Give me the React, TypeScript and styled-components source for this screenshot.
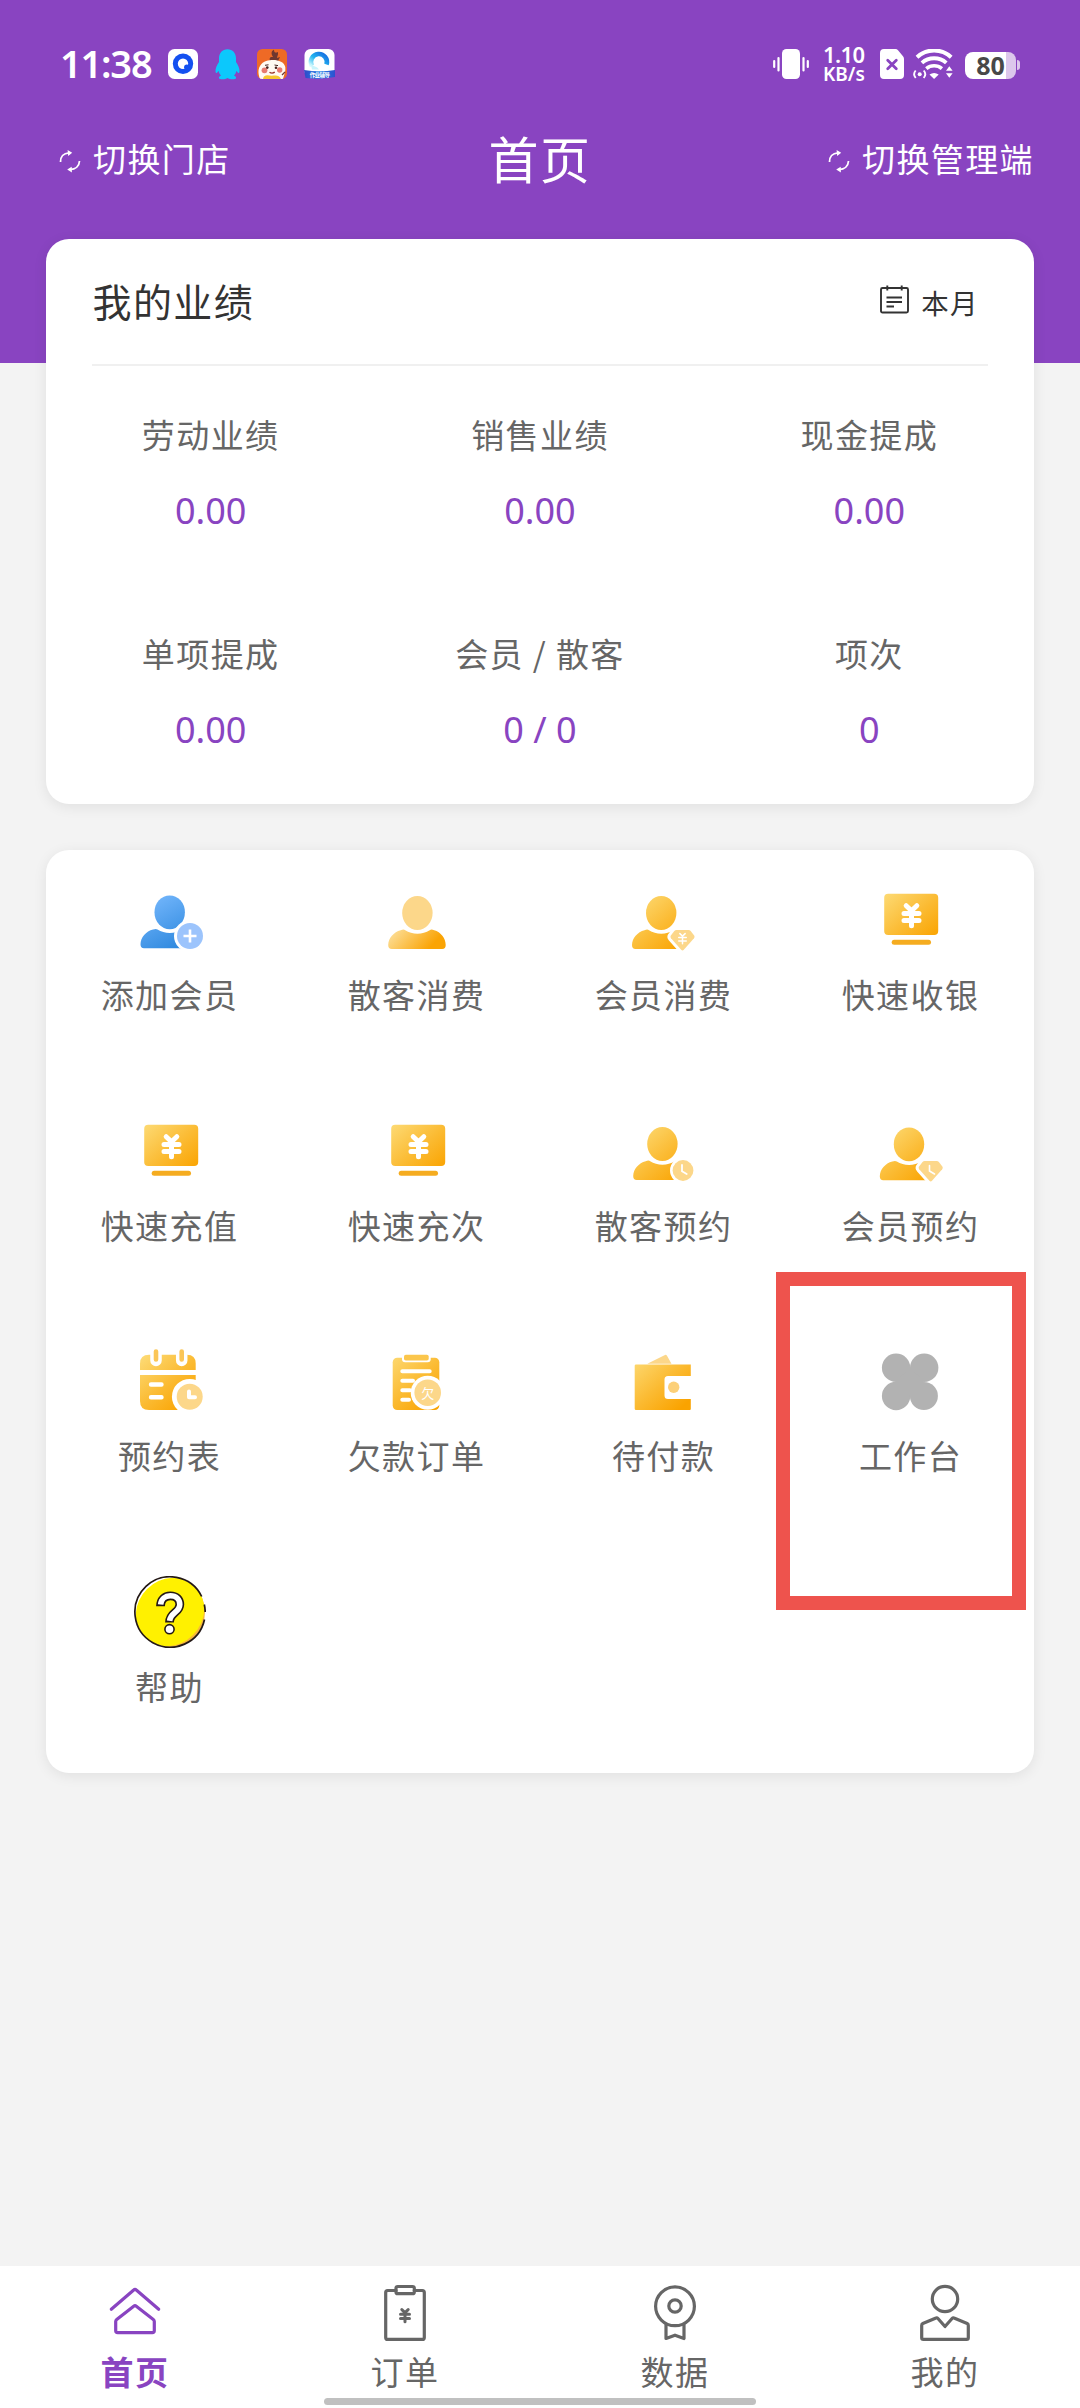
import React from "react";
import styled, { createGlobalStyle } from "styled-components";

const PURPLE = "#8944c1";
const GREY = "#666666";

const GlobalStyle = createGlobalStyle`
  *, *::before, *::after { box-sizing: border-box; }
  body {
    margin: 0;
    background: #f3f3f3;
    font-family: "Noto Sans CJK SC", "Noto Sans", sans-serif;
    letter-spacing: 1.4px;
  }
  svg { display: block; flex: none; }
`;

const Page = styled.div`
  display: flex;
  flex-direction: column;
  width: 1080px;
  height: 2408px;
  overflow: hidden;
  background: #f3f3f3;
`;

const Header = styled.header`
  flex: none;
  height: 363px;
  background: ${PURPLE};
  color: #fff;
`;

const StatusBar = styled.div`
  display: flex;
  align-items: center;
  justify-content: space-between;
  height: 118px;
  padding: 10px 60px 0 60px;
  font-family: "Noto Sans", sans-serif;
  letter-spacing: 0;
`;

const StatusGroup = styled.div<{ $gap: number }>`
  display: flex;
  align-items: center;
  gap: ${(p) => p.$gap}px;
`;

const Clock = styled.span`
  width: 93px;
  margin-bottom: 2px;
  font-size: 38px;
  font-weight: 600;
  line-height: 44px;
  letter-spacing: -1.2px;
  white-space: nowrap;
`;

const NetSpeed = styled.div`
  display: flex;
  flex-direction: column;
  width: 43px;
  font-weight: 600;
  white-space: nowrap;
`;

const SpeedValue = styled.span`
  font-size: 22px;
  line-height: 19px;
  letter-spacing: -0.6px;
`;

const SpeedUnit = styled.span`
  font-size: 19px;
  line-height: 20px;
`;

const Battery = styled.div`
  display: flex;
  align-items: center;
  gap: 1px;
`;

const BatteryBody = styled.div<{ $level: number }>`
  display: flex;
  align-items: center;
  justify-content: center;
  width: 51px;
  height: 27px;
  margin-top: 2px;
  border-radius: 8px;
  background: linear-gradient(90deg, #fff ${(p) => p.$level}%, #dcc7ec ${(p) => p.$level}%);
  color: #484848;
  font-size: 25px;
  font-weight: 700;
  line-height: 27px;
`;

const BatteryTip = styled.div`
  width: 3px;
  height: 10px;
  margin-top: 2px;
  border-radius: 0 3px 3px 0;
  background: #dcc7ec;
`;

const NavBar = styled.div`
  display: grid;
  grid-template-columns: 1fr auto 1fr;
  align-items: center;
  height: 80px;
  padding: 0 46px 0 59px;
`;

const NavAction = styled.div<{ $end?: boolean }>`
  display: flex;
  align-items: center;
  justify-content: ${(p) => (p.$end ? "flex-end" : "flex-start")};
  gap: 12px;
  font-size: 33px;
  line-height: 44px;

  svg {
    margin-top: 5px;
  }
`;

const Title = styled.h1`
  margin: 0 0 3px -13px;
  font-size: 50px;
  font-weight: 400;
  line-height: 60px;
`;

const Card = styled.section`
  flex: none;
  margin: 0 46px;
  border-radius: 23px;
  background: #fff;
  box-shadow: 0 3px 14px rgba(0, 0, 0, 0.08);
`;

const StatsCard = styled(Card)`
  margin-top: -124px;
`;

const MenuCard = styled(Card)`
  display: grid;
  grid-template-columns: repeat(4, 1fr);
  grid-template-rows: repeat(4, 230.67px);
  margin-top: 46px;
`;

const CardHeader = styled.div`
  display: flex;
  align-items: center;
  justify-content: space-between;
  height: 127px;
  margin: 0 46px;
  padding: 0 9px 2px 0;
  border-bottom: 2px solid #f0f0f0;
  color: #333;
`;

const CardTitle = styled.h2`
  margin: 0 0 2px 0.5px;
  font-size: 39px;
  font-weight: 400;
  line-height: 50px;
`;

const Period = styled.div`
  display: flex;
  align-items: center;
  gap: 12px;
  padding-top: 2px;
  font-size: 27.5px;
  line-height: 36px;

  svg {
    margin-bottom: 4px;
  }
`;

const StatsGrid = styled.div`
  display: grid;
  grid-template-columns: repeat(3, 1fr);
  grid-template-rows: 219px 219px;
`;

const Stat = styled.div`
  display: flex;
  flex-direction: column;
  align-items: center;
  gap: 30px;
  padding-top: 46px;
`;

const Label = styled.span`
  color: ${GREY};
  font-size: 33px;
  line-height: 44px;
`;

const Value = styled.span`
  color: ${PURPLE};
  font-family: "Noto Sans", sans-serif;
  font-size: 36px;
  line-height: 50px;
  letter-spacing: 0;
`;

const Tile = styled.div`
  position: relative;
  display: flex;
  flex-direction: column;
  align-items: center;
  gap: 16px;
  padding-top: 34px;
`;

const Highlight = styled.div`
  position: absolute;
  top: -39px;
  right: 8.5px;
  width: 250px;
  height: 338px;
  border: 14.5px solid #ee534d;
`;

const Spacer = styled.div`
  flex: 1;
`;

const TabBar = styled.nav`
  display: grid;
  grid-template-columns: repeat(4, 1fr);
  flex: none;
  height: 142px;
  padding-top: 17px;
  background: #fff;
`;

const Tab = styled.div<{ $active?: boolean }>`
  display: flex;
  flex-direction: column;
  align-items: center;
  gap: 6px;
  color: ${(p) => (p.$active ? PURPLE : GREY)};
  font-size: 33px;
  font-weight: ${(p) => (p.$active ? 700 : 400)};
  line-height: 44px;
`;

const HomeIndicator = styled.div`
  flex: none;
  align-self: center;
  width: 432px;
  height: 7px;
  margin: -10px 0 3px;
  border-radius: 4px;
  background: #c0c0c0;
`;

/* ---------- status bar icons ---------- */

const BrowserApp = () => (
  <svg width="30" height="30" viewBox="0 0 30 30">
    <rect width="30" height="30" rx="6.5" fill="#fff" />
    <circle cx="15" cy="14.7" r="10.2" fill="#1450f0" />
    <circle cx="15" cy="14.7" r="5.2" fill="#fff" />
    <circle cx="18.8" cy="18.3" r="2.7" fill="#1450f0" />
  </svg>
);

const PenguinApp = () => (
  <svg width="25" height="31" viewBox="0 0 25 31">
    <path
      d="M12.5 .3C7.300 .3 4 4.200 4 9.300V13C2 16 .2 19.500 .5 22.600C.7 24.800 2 24.300 3.500 21.700C4 23.700 4.800 25.200 6 26.400C4.300 27.200 3.600 28.200 4 29.300C4.500 30.600 10.500 30.600 12.500 29C14.500 30.600 20.500 30.600 21 29.300C21.400 28.200 20.700 27.200 19 26.400C20.200 25.200 21 23.700 21.500 21.700C23 24.300 24.300 24.800 24.500 22.600C24.800 19.500 23 16 21 13V9.300C21 4.200 17.700 .3 12.500 .3Z"
      fill="#0cc8fc"
    />
  </svg>
);

const CartoonApp = () => (
  <svg width="30" height="30" viewBox="0 0 30 30">
    <defs>
      <clipPath id="cartoon"><rect width="30" height="30" rx="5.500" /></clipPath>
    </defs>
    <g clipPath="url(#cartoon)">
      <rect width="30" height="30" fill="#ee6a26" />
      <path d="M13 12C12 8 13.500 8 16 8C14 5 14 2 17 .8C17 4 19 4 21 3C21.500 6 20 7 20 9L23 8L21 12Z" fill="#70372f" />
      <path d="M3 30C1.500 26 .5 21 3 17C6 11.500 12 11 16 11C22 11 27 13 28.300 18C29 22 27 26 26 30Z" fill="#fffaf2" />
      <circle cx="7.500" cy="21.300" r="2.900" fill="#e77b70" />
      <circle cx="22.700" cy="21" r="2.700" fill="#e77b70" />
      <circle cx="10.300" cy="18.600" r="1.300" fill="#44211c" />
      <circle cx="19" cy="18.800" r="1.300" fill="#44211c" />
      <path d="M8 16.300L11.500 15.800M17.500 16L21 16.600" stroke="#44211c" strokeWidth="1" />
      <path d="M12.500 23.200Q15 25 17.800 23.200" stroke="#9d3a2c" strokeWidth="1.400" fill="none" />
      <path d="M6 30C7 25 11 26.500 14.500 26.700C19 26.500 22 25.500 24 30Z" fill="#f7c62f" />
      <path d="M25 26L28 23" stroke="#70372f" strokeWidth="1.200" />
    </g>
  </svg>
);

const CloudApp = () => (
  <svg width="31" height="30" viewBox="0 0 31 30">
    <defs>
      <linearGradient id="arch" x1="0" y1="1" x2="1" y2="0">
        <stop offset="0" stopColor="#d5fbff" />
        <stop offset=".45" stopColor="#22b4f0" />
        <stop offset="1" stopColor="#1668e0" />
      </linearGradient>
      <linearGradient id="ribbon" x1="0" y1="0" x2="1" y2="0">
        <stop offset="0" stopColor="#2f49c8" />
        <stop offset=".5" stopColor="#2383e8" />
        <stop offset="1" stopColor="#2d50cf" />
      </linearGradient>
    </defs>
    <rect x=".5" width="30" height="28" rx="6" fill="#fff" />
    <path d="M8 17A8 8 0 1 1 22.500 15.500" fill="none" stroke="url(#arch)" strokeWidth="4.600" />
    <path d="M6.500 14C9 18 13 17 15 20.500H8Z" fill="#c9f4fc" />
    <path d="M0 21Q15.500 23.500 31 21V28Q15.500 31 1.500 29Z" fill="url(#ribbon)" />
    <text x="15.500" y="28.200" fontSize="5.500" fontWeight="700" fill="#fff" textAnchor="middle" letterSpacing="-.6" fontFamily="Noto Sans CJK SC, sans-serif">
      作业辅导
    </text>
  </svg>
);

const VibrateIcon = () => (
  <svg width="36" height="30" viewBox="0 0 36 30" fill="none" stroke="#fff" strokeWidth="2.200" strokeLinecap="round">
    <rect x="9" y="0" width="18" height="30" rx="4.500" fill="#fff" stroke="none" />
    <path d="M1.200 12V18M5.500 9V21.500M30.500 9V21.500M34.800 12V18" />
  </svg>
);

const SimIcon = () => (
  <svg width="24" height="30" viewBox="0 0 24 30">
    <path d="M4 0H15.500Q17 0 18 1.200L23 7.200Q24 8.400 24 10V26Q24 30 20 30H4Q0 30 0 26V4Q0 0 4 0Z" fill="#fff" />
    <path d="M7.700 11.200L16.300 19.800M16.300 11.200L7.700 19.800" stroke={PURPLE} strokeWidth="2.800" strokeLinecap="round" />
  </svg>
);

const WifiIcon = () => (
  <svg width="41" height="30" viewBox="0 0 41 30" fill="none" stroke="#fff">
    <path d="M4 8.200A25 25 0 0 1 38.200 8.200" strokeWidth="4" />
    <path d="M8.900 13.900A18.500 18.500 0 0 1 33.300 13.900" strokeWidth="3.900" />
    <path d="M13.300 19.700A12 12 0 0 1 28.900 19.700" strokeWidth="3.600" />
    <path d="M16.500 25.500Q21.100 22.500 25.700 25.500L21.100 30Z" fill="#fff" stroke="none" />
    <circle cx="6.700" cy="25.200" r="2" fill="#fff" stroke="none" />
    <path d="M2.700 21.500Q-.5 25.200 2.700 29M10.700 21.500Q13.900 25.200 10.700 29" strokeWidth="1.900" />
    <path d="M33 21.800L36.300 17.300L39.600 21.800ZM33 24.300L36.300 28.800L39.600 24.300Z" fill="#fff" stroke="none" />
  </svg>
);

/* ---------- header icons ---------- */

const SwitchIcon = () => (
  <svg width="22" height="24" viewBox="0 0 22 24" fill="none" stroke="#fff" strokeWidth="1.800">
    <path d="M1.500 13C1.300 7.800 4.500 4.200 10 3.800M20.500 12C20.300 17 16.500 20.300 11 20.700" />
    <path d="M8.600 .9L13.200 3.800L9.200 6.900ZM12.700 17.700L8.200 20.600L12.900 23.500Z" fill="#fff" stroke="none" />
  </svg>
);

const CalendarIcon = () => (
  <svg width="29" height="29" viewBox="0 0 29 29" fill="none" stroke="#333" strokeWidth="1.900">
    <rect x="1" y="3" width="27" height="24.500" rx="1.500" />
    <path d="M7.300 .5V5.500M21.700 .5V5.500M6.500 12.500H22M6.500 17H22M6.500 21.500H14" />
  </svg>
);

/* ---------- menu icons ---------- */

const Gradients = () => (
  <defs>
    <linearGradient id="gold" x1="8" y1="10" x2="54" y2="62" gradientUnits="userSpaceOnUse">
      <stop offset="0" stopColor="#fddb76" />
      <stop offset=".55" stopColor="#fbbb33" />
      <stop offset="1" stopColor="#faa300" />
    </linearGradient>
    <linearGradient id="goldBody" x1="14" y1="42" x2="40" y2="66" gradientUnits="userSpaceOnUse">
      <stop offset="0" stopColor="#fcd98a" />
      <stop offset="1" stopColor="#faa405" />
    </linearGradient>
    <linearGradient id="blue" x1="14" y1="10" x2="44" y2="64" gradientUnits="userSpaceOnUse">
      <stop offset="0" stopColor="#76b8fd" />
      <stop offset="1" stopColor="#2c87dd" />
    </linearGradient>
  </defs>
);

const MenuSvg = ({ children }: { children: React.ReactNode }) => (
  <svg width="72" height="72" viewBox="0 0 72 72">
    <Gradients />
    {children}
  </svg>
);

type PersonProps = { x: number; y?: number; head: string; body: string };

const Person = ({ x, y = 0, head, body }: PersonProps) => (
  <g transform={`translate(${x} ${y})`}>
    <path
      d="M13 46.200Q16 45 17.500 46.200C24.500 50.800 35 50.800 42 46.200Q43.500 45 46.500 46.200C53 48 58 54 58 61Q58 65 54.500 65H4Q.5 65 .5 61C.5 54 6 48 13 46.200Z"
      fill={body}
    />
    <ellipse cx="29.700" cy="29" rx="15.200" ry="16.900" fill={head} />
  </g>
);

type YenProps = { cx: number; cy: number; s: number; color?: string; w?: number };

const Yen = ({ cx, cy, s, color = "#fff", w = 5 }: YenProps) => (
  <path
    transform={`translate(${cx} ${cy}) scale(${s})`}
    d="M-5.300 -9.800L0 -4.800L5.300 -9.800M-7.500 -2H7.500M-7.500 5H7.500M0 -4V10.300"
    fill="none"
    stroke={color}
    strokeWidth={w}
    strokeLinecap="round"
    strokeLinejoin="round"
  />
);

const DIAMOND = "M49 46H61Q62.300 46 63.200 47L66.800 51.800Q67.500 53 66.500 54.200L56.300 65.800Q55 67.200 53.700 65.800L43.500 54.200Q42.500 53 43.200 51.800L46.800 47Q47.700 46 49 46Z";

const Diamond = ({ x }: { x: number }) => (
  <g transform={`translate(${x} 0)`}>
    <path d={DIAMOND} fill="#fff" stroke="#fff" strokeWidth="6" />
    <path d={DIAMOND} fill="#fcd78a" />
  </g>
);

const AddMemberIcon = () => (
  <MenuSvg>
    <Person x={6} y={-0.7} head="url(#blue)" body="url(#blue)" />
    <circle cx="56" cy="52" r="16" fill="#fff" />
    <circle cx="56" cy="52" r="13" fill="#9cc4fc" />
    <path d="M49.500 52H62.500M56 45.500V58.500" stroke="#fff" strokeWidth="2.600" />
  </MenuSvg>
);

const GuestIcon = () => (
  <MenuSvg>
    <Person x={6.7} head="#fcd78a" body="url(#goldBody)" />
  </MenuSvg>
);

const MemberSpendIcon = () => (
  <MenuSvg>
    <Person x={3.5} head="url(#gold)" body="url(#gold)" />
    <Diamond x={-0.5} />
    <Yen cx={54.500} cy={54.500} s={0.5} w={3} />
  </MenuSvg>
);

const CashIcon = ({ x = 0 }: { x?: number }) => (
  <MenuSvg>
    <g transform={`translate(${x} 0)`}>
      <rect x="10.200" y="9.700" width="54" height="41.300" rx="4" fill="url(#gold)" />
      <rect x="17.700" y="55.700" width="39.300" height="5" rx="2.500" fill="#f5ac20" />
      <Yen cx={37.500} cy={31.500} s={1} />
    </g>
  </MenuSvg>
);

const GuestBookIcon = () => (
  <MenuSvg>
    <Person x={4.700} head="url(#gold)" body="url(#gold)" />
    <circle cx="55" cy="55.500" r="13" fill="#fff" />
    <circle cx="55" cy="55.500" r="10.400" fill="#fcd78a" />
    <path d="M54 50V56.300L58.700 59" fill="none" stroke="#fff" strokeWidth="1.800" strokeLinecap="round" />
  </MenuSvg>
);

const MemberBookIcon = () => (
  <MenuSvg>
    <Person x={4.300} y={0.300} head="url(#gold)" body="url(#gold)" />
    <Diamond x={0.700} />
    <path d="M54.500 50.500V56L59.500 59" fill="none" stroke="#fff" strokeWidth="1.600" strokeLinecap="round" />
  </MenuSvg>
);

const ScheduleIcon = () => (
  <MenuSvg>
    <path d="M15 9.700H53Q61.700 9.700 61.700 18.500V25H6V18.500Q6 9.700 15 9.700Z" fill="url(#gold)" />
    <path d="M6 30H61.700V65H15Q6 65 6 56Z" fill="url(#gold)" />
    <path d="M22 2V15.500M47.700 2V15.500" stroke="#fff" strokeWidth="11.500" strokeLinecap="round" />
    <path d="M22 6.500V14.500M47.700 6.500V14.500" stroke="#fbc657" strokeWidth="4.600" strokeLinecap="round" />
    <path d="M17 39.500H27.500M17 52.200H27.500" stroke="#fff" strokeWidth="4.400" strokeLinecap="round" />
    <circle cx="55.700" cy="51.700" r="17.800" fill="#fff" />
    <circle cx="55.700" cy="51.700" r="13" fill="#fcd78a" />
    <path d="M55 46.500V52.300H61" fill="none" stroke="#fff" strokeWidth="4" strokeLinecap="round" strokeLinejoin="round" />
  </MenuSvg>
);

const DebtIcon = () => (
  <MenuSvg>
    <rect x="11.700" y="12.700" width="46.600" height="52.300" rx="4.500" fill="url(#gold)" />
    <rect x="21" y="7.700" width="28.700" height="9.600" rx="3" fill="#fff" />
    <rect x="23" y="9.700" width="24.700" height="5.800" rx="1.800" fill="#fbc64c" />
    <path d="M21.300 26.300H48.700M21.300 35.800H32M21.300 45.200H29M21.300 54.700H28" stroke="#fff" strokeWidth="4" strokeLinecap="round" />
    <circle cx="46.700" cy="47.700" r="17" fill="#fff" />
    <circle cx="46.700" cy="47.700" r="13.300" fill="#fcd78a" />
    <text x="46.700" y="52.500" fontSize="13" fill="#fff" textAnchor="middle" letterSpacing="0">
      欠
    </text>
  </MenuSvg>
);

const WalletIcon = () => (
  <MenuSvg>
    <path d="M19.300 18.700L36.500 10.200Q38 9.300 39 10.700L43.500 18.700Z" fill="#fcd78a" />
    <path d="M8 19.500H62.800V31H40Q36.500 31 36.500 34.500V50.500Q36.500 54 40 54H62.800V64Q62.800 65 61.800 65H8Q6.700 65 6.700 63.700V20.800Q6.700 19.500 8 19.500Z" fill="url(#gold)" />
    <circle cx="45.700" cy="42.300" r="5.700" fill="#fcd078" />
  </MenuSvg>
);

const WorkbenchIcon = () => (
  <MenuSvg>
    <g fill="#b2b2b2">
      <circle cx="21.100" cy="22.800" r="14.200" />
      <circle cx="49.200" cy="22.800" r="14.200" />
      <circle cx="21.100" cy="51" r="14.200" />
      <circle cx="48.900" cy="51" r="14" />
      <path d="M21 37L35 22L49 37L35 51Z" />
    </g>
  </MenuSvg>
);

const MARK = "M26.500 30.200C26.500 23.500 30.800 19.800 36.300 19.800C42.300 19.800 45.800 23.500 45.800 28.500C45.800 37 35.500 36 35.500 46.500";

const HelpIcon = () => (
  <MenuSvg>
    <defs>
      <clipPath id="coin"><circle cx="36" cy="36" r="35" /></clipPath>
    </defs>
    <g clipPath="url(#coin)">
      <rect width="72" height="72" fill="#fff" />
      <circle cx="39" cy="39" r="35" fill="#f6b83a" />
      <ellipse cx="36" cy="36" rx="36" ry="32.500" fill="#fff100" transform="rotate(-45 36 36)" />
    </g>
    <path
      d="M67.700 20.500A35.200 35.200 0 1 0 70.500 43.500M70.300 28.500A35 35 0 0 1 71.200 36"
      fill="none"
      stroke="#231815"
      strokeWidth="1.700"
    />
    <path d={MARK} fill="none" stroke="#231815" strokeWidth="8.800" />
    <path d={MARK} fill="none" stroke="#fff" strokeWidth="5.600" pathLength="100" strokeDasharray="0 3 94 100" />
    <circle cx="35.500" cy="53.200" r="4.600" fill="#fff" stroke="#231815" strokeWidth="1.600" />
  </MenuSvg>
);

/* ---------- tab icons ---------- */

const TabSvg = ({ children }: { children: React.ReactNode }) => (
  <svg width="60" height="60" viewBox="0 0 60 60" fill="none" stroke="currentColor" strokeWidth="3.200" strokeLinecap="round" strokeLinejoin="round">
    {children}
  </svg>
);

const HomeTabIcon = () => (
  <TabSvg>
    <path d="M6.300 26.300L28.700 7Q30 5.800 31.300 7L53.700 26.300" />
    <path d="M28.700 23.200Q30 22.200 31.300 23.200L48.300 36.500Q49.300 37.300 49.300 38.500V47.500Q49.300 49.700 47.300 49.700H12.700Q10.700 49.700 10.700 47.500V38.500Q10.700 37.300 11.700 36.500Z" />
  </TabSvg>
);

const OrderTabIcon = () => (
  <TabSvg>
    <path d="M21 7.500H12.700Q10.700 7.500 10.700 9.500V54.400Q10.700 56.400 12.700 56.400H47.300Q49.300 56.400 49.300 54.400V9.500Q49.300 7.500 47.300 7.500H39.300" />
    <rect x="21" y="3.500" width="18.300" height="7.200" rx="1.800" />
    <Yen cx={30} cy={32.500} s={0.6} color="currentColor" w={5} />
  </TabSvg>
);

const DataTabIcon = () => (
  <TabSvg>
    <circle cx="30" cy="23.300" r="19.400" />
    <circle cx="30" cy="23" r="6.200" />
    <path d="M21 41.500V55.500L30 52.200L39 55.500V41.500" />
  </TabSvg>
);

const MineTabIcon = () => (
  <TabSvg>
    <circle cx="30" cy="16" r="12.700" />
    <path d="M30 43.500L37.300 35.300Q38 34.500 39 35L52.200 40.500Q53.300 41 53.300 42.500V54.700Q53.300 56.400 51.600 56.400H8.400Q6.700 56.400 6.700 54.700V42.500Q6.700 41 7.800 40.500L21 35Q22 34.500 22.700 35.300Z" />
  </TabSvg>
);

const stats = [
  ["劳动业绩", "0.00"],
  ["销售业绩", "0.00"],
  ["现金提成", "0.00"],
  ["单项提成", "0.00"],
  ["会员 / 散客", "0 / 0"],
  ["项次", "0"],
];

const menu: { label: string; icon: React.ReactNode; highlighted?: boolean }[] = [
  { label: "添加会员", icon: <AddMemberIcon /> },
  { label: "散客消费", icon: <GuestIcon /> },
  { label: "会员消费", icon: <MemberSpendIcon /> },
  { label: "快速收银", icon: <CashIcon x={-1} /> },
  { label: "快速充值", icon: <CashIcon /> },
  { label: "快速充次", icon: <CashIcon /> },
  { label: "散客预约", icon: <GuestBookIcon /> },
  { label: "会员预约", icon: <MemberBookIcon /> },
  { label: "预约表", icon: <ScheduleIcon /> },
  { label: "欠款订单", icon: <DebtIcon /> },
  { label: "待付款", icon: <WalletIcon /> },
  { label: "工作台", icon: <WorkbenchIcon />, highlighted: true },
  { label: "帮助", icon: <HelpIcon /> },
];

const tabs = [
  { label: "首页", icon: <HomeTabIcon />, active: true },
  { label: "订单", icon: <OrderTabIcon /> },
  { label: "数据", icon: <DataTabIcon /> },
  { label: "我的", icon: <MineTabIcon /> },
];

export default function App() {
  return (
    <Page>
      <GlobalStyle />
      <Header>
        <StatusBar>
          <StatusGroup $gap={15}>
            <Clock>11:38</Clock>
            <StatusGroup $gap={17}>
              <BrowserApp />
              <PenguinApp />
              <CartoonApp />
              <CloudApp />
            </StatusGroup>
          </StatusGroup>
          <StatusGroup $gap={14}>
            <VibrateIcon />
            <NetSpeed>
              <SpeedValue>1.10</SpeedValue>
              <SpeedUnit>KB/s</SpeedUnit>
            </NetSpeed>
            <StatusGroup $gap={9}>
              <SimIcon />
              <StatusGroup $gap={11}>
                <WifiIcon />
                <Battery>
                  <BatteryBody $level={80}>80</BatteryBody>
                  <BatteryTip />
                </Battery>
              </StatusGroup>
            </StatusGroup>
          </StatusGroup>
        </StatusBar>
        <NavBar>
          <NavAction>
            <SwitchIcon />
            切换门店
          </NavAction>
          <Title>首页</Title>
          <NavAction $end>
            <SwitchIcon />
            切换管理端
          </NavAction>
        </NavBar>
      </Header>

      <StatsCard>
        <CardHeader>
          <CardTitle>我的业绩</CardTitle>
          <Period>
            <CalendarIcon />
            本月
          </Period>
        </CardHeader>
        <StatsGrid>
          {stats.map(([label, value]) => (
            <Stat key={label}>
              <Label>{label}</Label>
              <Value>{value}</Value>
            </Stat>
          ))}
        </StatsGrid>
      </StatsCard>

      <MenuCard>
        {menu.map((item) => (
          <Tile key={item.label}>
            {item.icon}
            <Label>{item.label}</Label>
            {item.highlighted && <Highlight />}
          </Tile>
        ))}
      </MenuCard>

      <Spacer />
      <TabBar>
        {tabs.map((tab) => (
          <Tab key={tab.label} $active={tab.active}>
            {tab.icon}
            {tab.label}
          </Tab>
        ))}
      </TabBar>
      <HomeIndicator />
    </Page>
  );
}
